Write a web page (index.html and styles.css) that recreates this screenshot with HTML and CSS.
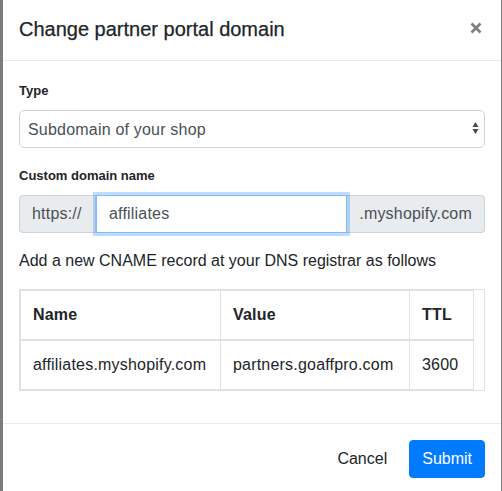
FILE: index.html
```html
<!DOCTYPE html>
<html lang="en">
<head>
<meta charset="utf-8">
<title>Change partner portal domain</title>
<link rel="stylesheet" href="styles.css">
</head>
<body>
<div class="modal">
  <div class="modal-header">
    <h5 class="modal-title">Change partner portal domain</h5>
    <button class="close" type="button" aria-label="Close">
      <svg width="12" height="12" viewBox="0 0 12 12"><path d="M1.5 1.5 L10.5 10.5 M10.5 1.5 L1.5 10.5" stroke="#808080" stroke-width="2.8" fill="none"/></svg>
    </button>
  </div>
  <div class="modal-body">
    <label class="field-label">Type</label>
    <div class="select-wrap">
      <select class="select">
        <option>Subdomain of your shop</option>
      </select>
      <svg class="select-arrows" width="7" height="14" viewBox="0 0 7 14"><path d="M0.5 6 L3.5 1 L6.5 6 Z M0.5 8 L3.5 13 L6.5 8 Z" fill="#4a4a4a"/></svg>
    </div>
    <label class="field-label">Custom domain name</label>
    <div class="input-group">
      <span class="addon addon-prepend">https://</span>
      <input class="input" type="text" value="affiliates">
      <span class="addon addon-append">.myshopify.com</span>
    </div>
    <p class="hint">Add a new CNAME record at your DNS registrar as follows</p>
    <div class="table-wrap">
      <table class="dns-table">
        <thead>
          <tr><th class="col-name">Name</th><th class="col-value">Value</th><th class="col-ttl">TTL</th></tr>
        </thead>
        <tbody>
          <tr><td>affiliates.myshopify.com</td><td>partners.goaffpro.com</td><td>3600</td></tr>
        </tbody>
      </table>
    </div>
  </div>
  <div class="modal-footer">
    <button class="btn btn-cancel" type="button">Cancel</button>
    <button class="btn btn-primary" type="button">Submit</button>
  </div>
</div>
</body>
</html>
```

FILE: styles.css
```css
html, body {
  margin: 0;
  padding: 0;
  overflow: hidden;
  height: 100%;
}
body {
  background: #7b7b7b;
  font-family: "Liberation Sans", Arial, Helvetica, sans-serif;
  color: #212529;
  font-size: 16px;
  line-height: 24px;
}
.modal {
  margin-left: 3px;
  width: 498px;
  background: #fff;
}
.modal-header {
  display: flex;
  justify-content: space-between;
  align-items: flex-start;
  padding: 14px 16px 16px;
  border-bottom: 1px solid #e9ecef;
}
.modal-title {
  margin: 0;
  font-size: 20px;
  line-height: 30px;
  font-weight: 500;
  color: #212529;
  -webkit-text-stroke: 0.25px #212529;
}
.close {
  border: 0;
  background: none;
  padding: 0;
  margin: 8px 3px 0 0;
  width: 12px;
  height: 12px;
  display: flex;
}
.modal-body {
  padding: 20px 16px 16px;
  letter-spacing: 0.2px;
}
.field-label {
  display: block;
  font-size: 13px;
  line-height: 20px;
  font-weight: 700;
  margin-bottom: 9px;
  color: #212529;
  letter-spacing: 0;
}
.select-wrap {
  position: relative;
  height: 38px;
  margin-bottom: 18px;
}
.select {
  appearance: none;
  -webkit-appearance: none;
  width: 100%;
  height: 38px;
  border: 1px solid #ced4da;
  border-radius: 5px;
  background: #fff;
  padding: 0 8px;
  font-family: inherit;
  font-size: 16px;
  letter-spacing: 0.2px;
  color: #495057;
  margin: 0;
}
.select-arrows {
  position: absolute;
  right: 6px;
  top: 11px;
}
.input-group {
  display: flex;
  height: 38px;
  margin-bottom: 16px;
}
.addon {
  display: flex;
  align-items: center;
  padding: 0 12px;
  background: #e9ecef;
  border: 1px solid #ced4da;
  color: #495057;
  font-size: 16px;
}
.addon-prepend {
  width: 77px;
  box-sizing: border-box;
  border-radius: 4px 0 0 4px;
}
.addon-append {
  border-left: 0;
  border-radius: 0 4px 4px 0;
}
.input {
  flex: 1;
  min-width: 0;
  margin: 0;
  border: 1px solid #80bdff;
  box-shadow: 0 0 0 3px rgba(0, 123, 255, 0.25);
  padding: 0 12px;
  font-family: inherit;
  font-size: 16px;
  letter-spacing: 0.2px;
  color: #495057;
  outline: none;
  position: relative;
  z-index: 1;
  box-sizing: border-box;
  height: 38px;
}
.hint {
  margin: 0 0 16px;
  font-size: 16px;
  line-height: 24px;
  letter-spacing: 0;
}
.table-wrap {
  border: 1px solid #dee2e6;
  margin-bottom: 16px;
}
.dns-table {
  border-collapse: collapse;
  border: 1px solid #dee2e6;
}
.dns-table th,
.dns-table td {
  padding: 12px;
  border: 1px solid #dee2e6;
  text-align: left;
  font-size: 16px;
  line-height: 24px;
  white-space: nowrap;
}
.dns-table th {
  font-weight: 700;
  vertical-align: bottom;
  border-bottom: 2px solid #dee2e6;
}
.col-name { width: 175px; }
.col-value { width: 164px; }
.col-ttl { width: 39px; }
.modal-footer {
  display: flex;
  justify-content: flex-end;
  gap: 9px;
  padding: 16px;
  border-top: 1px solid #e9ecef;
}
.btn {
  font-family: inherit;
  font-size: 16px;
  line-height: 24px;
  padding: 6px 12px;
  border: 1px solid transparent;
  border-radius: 4px;
  margin: 0;
}
.btn-cancel {
  background: transparent;
  color: #212529;
}
.btn-primary {
  background: #007bff;
  border-color: #007bff;
  color: #fff;
}
```
